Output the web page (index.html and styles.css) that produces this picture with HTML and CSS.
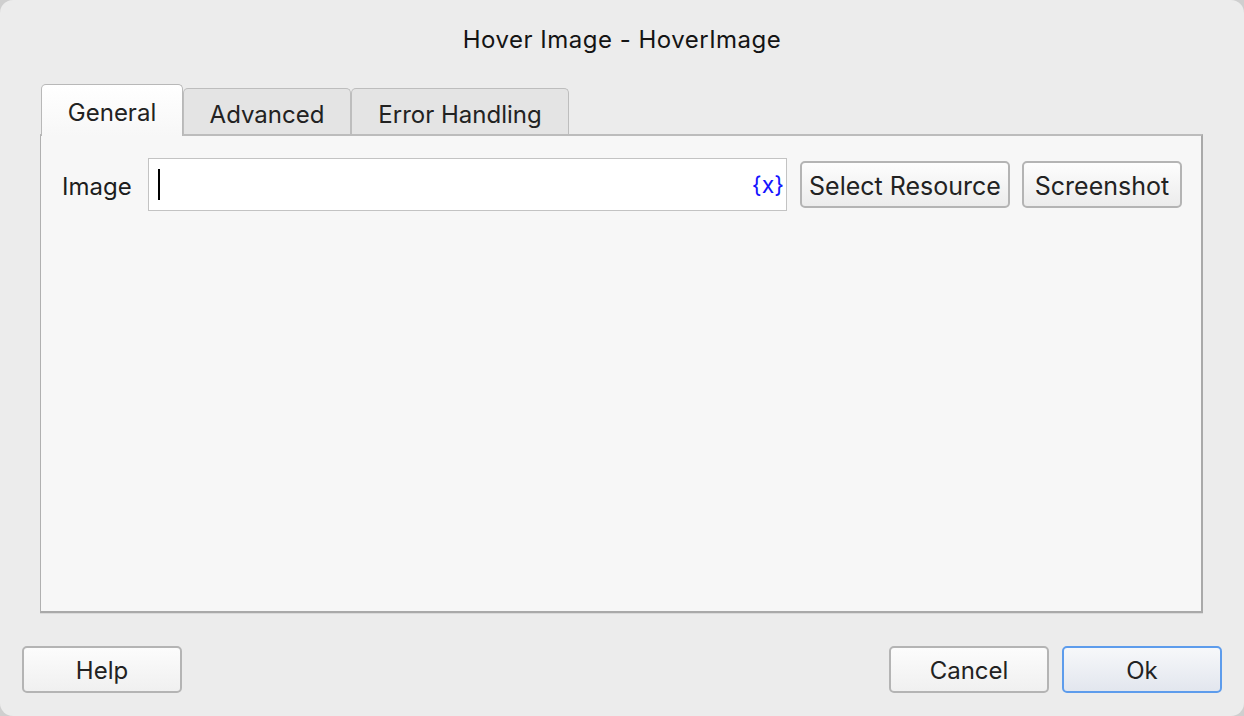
FILE: index.html
```html
<!DOCTYPE html>
<html>
<head>
<meta charset="utf-8">
<title>Hover Image - HoverImage</title>
<link rel="stylesheet" href="styles.css">
</head>
<body>
<div class="dialog">
  <div class="title">Hover Image - HoverImage</div>
  <div class="content">
    <div class="tabs">
      <div class="tab tab-general active">General</div>
      <div class="tab tab-advanced">Advanced</div>
      <div class="tab tab-error">Error Handling</div>
    </div>
    <div class="panel">
      <div class="row">
        <label class="label">Image</label>
        <div class="field">
          <span class="caret"></span>
          <span class="var">{x}</span>
        </div>
        <button class="btn btn-resource">Select Resource</button>
        <button class="btn btn-shot">Screenshot</button>
      </div>
    </div>
  </div>
  <div class="footer">
    <button class="btn btn-foot">Help</button>
    <div class="spacer"></div>
    <button class="btn btn-foot">Cancel</button>
    <button class="btn btn-foot btn-ok">Ok</button>
  </div>
</div>
</body>
</html>
```

FILE: styles.css
```css
html, body {
  margin: 0;
  padding: 0;
  background: #cfcfcf;
}

body {
  font-family: Inter, "Liberation Sans", Arial, sans-serif;
  color: #1d1d1d;
}

.dialog {
  width: 1244px;
  height: 716px;
  box-sizing: border-box;
  background: #ececec;
  border-radius: 13px;
  display: flex;
  flex-direction: column;
  overflow: hidden;
}

.title {
  height: 85px;
  box-sizing: border-box;
  padding-top: 26px;
  text-align: center;
  font-size: 24px;
  letter-spacing: 0.5px;
  line-height: 28px;
  color: #141414;
}

.content {
  margin: 0 41px 0 40px;
  display: flex;
  flex-direction: column;
}

.tabs {
  display: flex;
  align-items: flex-end;
  height: 51px;
  margin-bottom: -2px;
  padding-left: 1px;
}

.tab {
  box-sizing: border-box;
  height: 48px;
  border: 1px solid #bdbdbd;
  border-bottom: none;
  border-radius: 5px 5px 0 0;
  background: #e4e4e4;
  font-size: 24px;
  line-height: 45px;
  padding-top: 3px;
  text-align: center;
  color: #222;
}

.tab.active {
  position: relative;
  z-index: 1;
  height: 52px;
  line-height: 46px;
  background: linear-gradient(#ffffff, #f7f7f7);
  border-color: #b8b8b8;
  padding-top: 5px;
  padding-bottom: 0;
}

.tab-general { width: 142px; }
.tab-advanced { width: 168px; }
.tab-error { width: 218px; }

.panel {
  height: 479px;
  box-sizing: border-box;
  background: #f7f7f7;
  border: 1px solid #b0b0b0;
  border-top: 2px solid #bcbcbc;
  border-right: 2px solid #a9a9a9;
  border-bottom: 2px solid #a9a9a9;
  box-shadow: 0 1px 0 #dadada;
}

.row {
  display: flex;
  align-items: center;
  padding: 22px 19px 0 21px;
}

.label {
  width: 73px;
  font-size: 24px;
  padding-top: 4px;
  color: #1d1d1d;
  margin-right: 13px;
}

.field {
  flex: 1;
  height: 53px;
  box-sizing: border-box;
  background: #ffffff;
  border: 1px solid #c3c3c3;
  display: flex;
  align-items: center;
  padding: 0 2px 0 9px;
  margin-right: 13px;
}

.caret {
  width: 2px;
  height: 31px;
  background: #000;
}

.var {
  margin-left: auto;
  color: #1414ff;
  font-size: 23px;
  padding-top: 1px;
}

.btn {
  box-sizing: border-box;
  height: 47px;
  border: 2px solid #b4b4b4;
  border-radius: 5px;
  background: linear-gradient(#fdfdfd, #ececec);
  font-family: Inter, "Liberation Sans", Arial, sans-serif;
  font-size: 24px;
  color: #222;
  padding: 2px 0 0 0;
}

.btn-resource {
  width: 210px;
  margin-right: 12px;
  font-size: 25px;
}

.btn-shot {
  width: 160px;
  font-size: 25px;
}

.footer {
  display: flex;
  align-items: center;
  padding: 0 22px;
  margin-top: 33px;
}

.spacer { flex: 1; }

.btn-foot {
  width: 160px;
  padding-top: 1px;
  background: linear-gradient(#fcfcfc, #f0f0f0);
}

.btn-foot + .btn-foot {
  margin-left: 13px;
}

.btn-ok {
  border-color: #5d9cec;
  background: linear-gradient(#f7f8fa, #e2e6ee);
}
```
